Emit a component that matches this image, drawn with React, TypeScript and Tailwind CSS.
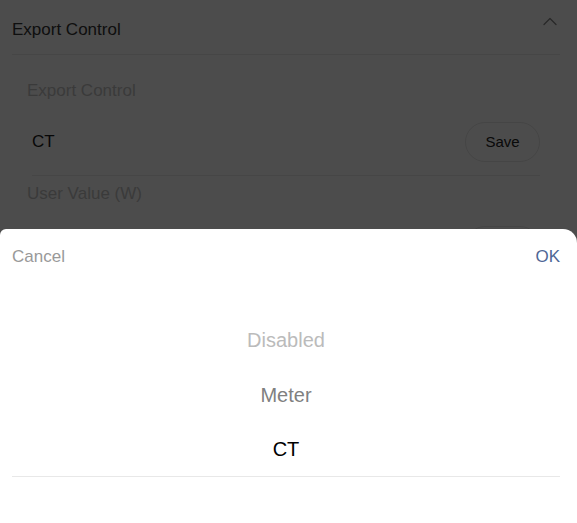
import React from 'react';

const options = ['Disabled', 'Meter', 'CT'];

function ChevronUp() {
  return (
    <svg width="14" height="9" viewBox="0 0 14 9" fill="none" aria-hidden="true">
      <path d="M1 7.5 7 1.5l6 6" stroke="#8a8a8a" strokeWidth="1.4" strokeLinecap="round" strokeLinejoin="round" />
    </svg>
  );
}

function SaveButton() {
  return (
    <button
      type="button"
      className="h-10 w-[75px] shrink-0 rounded-full border border-[#e6e6e6] bg-white text-[15px] text-[#222]"
    >
      Save
    </button>
  );
}

export default function App() {
  return (
    <div
      className="relative h-[523px] w-full overflow-hidden bg-white"
      style={{ fontFamily: '"Liberation Sans", Arial, sans-serif' }}
    >
      {/* page behind the sheet */}
      <div className="pl-3 pr-[17px]">
        <div className="flex h-[55px] items-center justify-between border-b border-[#ececec] pr-[3px] pt-[6px]">
          <span className="text-[17px] leading-5 text-[#333]">Export Control</span>
          <span className="-mt-[18px]">
            <ChevronUp />
          </span>
        </div>

        <div className="pl-[15px] pr-5">
          <div className="mt-[26px] text-[17px] leading-5 text-[#c4c4c4]">Export Control</div>

          <div className="ml-[5px] mt-[21px] flex items-center justify-between border-b border-[#ececec] pb-[13px]">
            <span className="text-[17px] leading-5 text-[#1a1a1a]">CT</span>
            <SaveButton />
          </div>

          <div className="mt-2 text-[17px] leading-5 text-[#c4c4c4]">User Value (W)</div>

          <div className="ml-[5px] mt-[22px] flex items-center justify-end border-b border-[#ececec] pb-3">
            <SaveButton />
          </div>
        </div>
      </div>

      {/* dim overlay */}
      <div className="absolute inset-0 bg-black/70" />

      {/* picker sheet */}
      <div className="absolute inset-x-0 bottom-0 h-[294px] rounded-tl-[6px] rounded-tr-[14px] bg-white pl-3 pr-[17px]">
        <div className="flex h-14 items-center justify-between text-[17px]">
          <button type="button" className="text-[#999]">
            Cancel
          </button>
          <button type="button" className="text-[#4e6796]">
            OK
          </button>
        </div>

        <div className="pt-[27px]">
          {options.map((opt, i) => (
            <div
              key={opt}
              className={
                i === options.length - 1
                  ? 'flex h-[55px] items-center justify-center border-b border-[#e8e8e8] text-[20px] text-black'
                  : i === 0
                    ? 'flex h-[55px] items-center justify-center text-[20px] text-[#bbbbbb]'
                    : 'flex h-[55px] items-center justify-center text-[20px] text-[#808080]'
              }
            >
              {opt}
            </div>
          ))}
        </div>
      </div>
    </div>
  );
}
